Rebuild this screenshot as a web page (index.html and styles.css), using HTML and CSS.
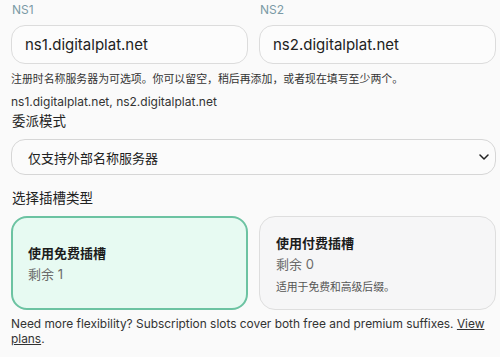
FILE: index.html
```html
<!DOCTYPE html>
<html lang="zh">
<head>
<meta charset="utf-8">
<link rel="stylesheet" href="styles.css">
</head>
<body>
<div class="page">
  <div class="ns-row">
    <div class="field">
      <label class="ns-label">NS1</label>
      <input class="ns-input" type="text" value="ns1.digitalplat.net">
    </div>
    <div class="field">
      <label class="ns-label">NS2</label>
      <input class="ns-input" type="text" value="ns2.digitalplat.net">
    </div>
  </div>
  <p class="hint">注册时名称服务器为可选项。你可以留空，稍后再添加，或者现在填写至少两个。</p>
  <p class="ns-list">ns1.digitalplat.net, ns2.digitalplat.net</p>
  <div class="section-title">委派模式</div>
  <div class="select">
    <span>仅支持外部名称服务器</span>
    <svg class="chev" width="10" height="6" viewBox="0 0 10 6"><path d="M1 1l4 4 4-4" fill="none" stroke="#222" stroke-width="1.5" stroke-linecap="round" stroke-linejoin="round"/></svg>
  </div>
  <div class="section-title slot-title">选择插槽类型</div>
  <div class="cards">
    <div class="card card-active">
      <div class="card-title">使用免费插槽</div>
      <div class="card-remain">剩余 1</div>
    </div>
    <div class="card">
      <div class="card-title">使用付费插槽</div>
      <div class="card-remain">剩余 0</div>
      <div class="card-desc">适用于免费和高级后缀。</div>
    </div>
  </div>
  <p class="footer">Need more flexibility? Subscription slots cover both free and premium suffixes. <a href="#">View</a> <a href="#">plans</a>.</p>
</div>
</body>
</html>
```
FILE: styles.css
```css
* { box-sizing: border-box; }
html, body { margin: 0; padding: 0; background: #fafafa; }
body {
  font-family: Inter, "Noto Sans CJK SC", sans-serif;
  color: #222;
  width: 500px;
  height: 357px;
  overflow: hidden;
}
.page { padding: 2px 4px 0 11px; }
.ns-row {
  display: grid;
  grid-template-columns: minmax(0, 1fr) minmax(0, 1fr);
  column-gap: 11px;
}
.field { display: flex; flex-direction: column; min-width: 0; }
.ns-label {
  font-size: 12px;
  line-height: 16px;
  color: #7b9aa6;
  padding-left: 1px;
  margin-bottom: 7px;
}
.ns-input {
  width: 100%;
  min-width: 0;
  height: 39px;
  border: 1px solid #dcdcdc;
  border-radius: 14px;
  background: #fcfcfc;
  font-family: inherit;
  font-size: 15px;
  color: #222;
  padding: 0 13px;
  outline: none;
}
.hint {
  margin: 7px 0 0;
  font-size: 10.9px;
  line-height: 16px;
  color: #333;
}
.ns-list {
  margin: 7px 0 0;
  font-size: 12px;
  line-height: 16px;
  color: #333;
}
.section-title {
  margin-top: 2px;
  font-size: 13.5px;
  line-height: 18px;
  color: #222;
  padding-left: 1px;
}
.select {
  margin-top: 9px;
  height: 36px;
  border: 1px solid #d6d6d6;
  border-radius: 14px;
  background: #fbfbfb;
  display: flex;
  align-items: center;
  justify-content: space-between;
  padding: 0 6px 0 16px;
  font-size: 13px;
  color: #222;
}
.slot-title { margin-top: 14px; }
.cards {
  margin-top: 9px;
  display: grid;
  grid-template-columns: minmax(0, 1fr) minmax(0, 1fr);
  column-gap: 11px;
  height: 94px;
}
.card {
  border: 1px solid #dedede;
  border-radius: 16px;
  background: #f6f6f7;
  display: flex;
  flex-direction: column;
  justify-content: center;
  padding: 4px 16px 0 16px;
}
.card-active {
  border: 2px solid #6cc3a2;
  background: #e7faf2;
  padding: 0 15px;
}
.card-title {
  font-size: 13px;
  font-weight: 700;
  line-height: 18px;
  color: #1c1c1c;
}
.card-remain {
  margin-top: 3px;
  font-size: 13px;
  line-height: 18px;
  color: #6a6a6a;
}
.card-desc {
  margin-top: 7px;
  font-size: 10.8px;
  line-height: 16px;
  color: #555;
}
.footer {
  margin: 6px 0 0;
  font-size: 11.9px;
  line-height: 15px;
  color: #333;
}
.footer a { color: #333; text-decoration: underline; }
```
